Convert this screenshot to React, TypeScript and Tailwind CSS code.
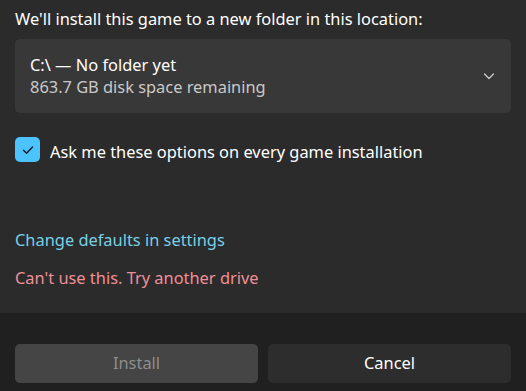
export default function App() {
  return (
    <div
      className="flex h-[391px] w-[526px] flex-col bg-[#2b2b2b] text-[16.4px] text-white"
      style={{ fontFamily: '"Noto Sans", "Open Sans", sans-serif' }}
    >
      {/* Conteúdo do diálogo */}
      <div className="flex-1 px-[15px] pt-[7px]">
        <p className="leading-[24px]">We'll install this game to a new folder in this location:</p>

        <div className="mt-[8px] flex h-[74px] items-center justify-between rounded-[5px] bg-[#383838] pl-[15px] pr-[15px]">
          <div>
            <p className="leading-[22px]">C:\ — No folder yet</p>
            <p className="leading-[22px] text-[#c9c9c9]">863.7 GB disk space remaining</p>
          </div>
          <svg width="12" height="12" viewBox="0 0 12 12" fill="none" className="mr-[1px]">
            <path d="M1.5 4 L6 8.5 L10.5 4" stroke="#cfcfcf" strokeWidth="1.2" strokeLinecap="round" strokeLinejoin="round" />
          </svg>
        </div>

        <label className="mt-[24px] flex items-center gap-[10px]">
          <span className="flex h-[25px] w-[25px] items-center justify-center rounded-[5px] bg-[#4cc2ff]">
            <svg width="14" height="14" viewBox="0 0 14 14" fill="none">
              <path d="M2.5 7.3 L5.6 10.3 L11.5 4" stroke="#0b1a22" strokeWidth="1.4" strokeLinecap="round" strokeLinejoin="round" />
            </svg>
          </span>
          <span className="translate-y-[2px] leading-[24px]">Ask me these options on every game installation</span>
        </label>

        <p className="mt-[66px] leading-[24px] text-[#78d0e6]">Change defaults in settings</p>
        <p className="mt-[14px] leading-[24px] text-[#ef8f98]">Can't use this. Try another drive</p>
      </div>

      {/* Rodapé com os botões */}
      <div className="flex h-[78px] gap-[10px] bg-[#202020] px-[15px] pt-[31px]">
        <button className="h-[39px] flex-1 rounded-[5px] bg-[#454545] text-[#8d8d8d]">Install</button>
        <button className="h-[39px] flex-1 rounded-[5px] bg-[#2d2d2d] text-white">Cancel</button>
      </div>
    </div>
  );
}
